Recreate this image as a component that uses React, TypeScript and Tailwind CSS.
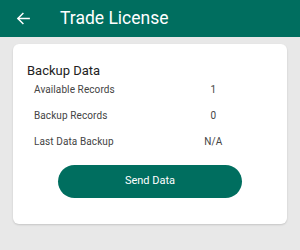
import React from 'react';

const rows = [
  { label: 'Available Records', value: '1' },
  { label: 'Backup Records', value: '0' },
  { label: 'Last Data Backup', value: 'N/A' },
];

const App = () => {
  return (
    <div className="w-[300px] h-[250px] bg-[#e8e8e8] font-['Roboto',sans-serif] overflow-hidden">
      {/* Header */}
      <div className="h-[37px] bg-[#006e5f] flex items-center pl-[16px]">
        <svg width="15" height="15" viewBox="0 0 24 24" fill="none" stroke="white" strokeWidth="2.4" strokeLinecap="square">
          <path d="M21 12H4" />
          <path d="M11 4l-8 8 8 8" />
        </svg>
        <span className="ml-[29px] text-white text-[17.5px] leading-none">Trade License</span>
      </div>

      {/* Card */}
      <div className="mx-[13px] mt-[7px] bg-white rounded-[6px] shadow-[0_1px_2px_rgba(0,0,0,0.15)] px-[14px] pt-[19px] pb-[26px]">
        <div className="text-[13px] leading-[16px] text-[#222]">Backup Data</div>
        <div className="mt-[4px] pl-[7px] flex flex-col gap-[12px]">
          {rows.map((r) => (
            <div key={r.label} className="grid grid-cols-2 text-[10px] leading-[14px] text-[#444] tracking-[0.1px]">
              <span>{r.label}</span>
              <span className="text-center">{r.value}</span>
            </div>
          ))}
        </div>
        <div className="mt-[16px] flex justify-center">
          <button className="w-[184px] h-[33px] rounded-full bg-[#006e5f] text-white text-[11px]">
            Send Data
          </button>
        </div>
      </div>
    </div>
  );
};

export default App;
